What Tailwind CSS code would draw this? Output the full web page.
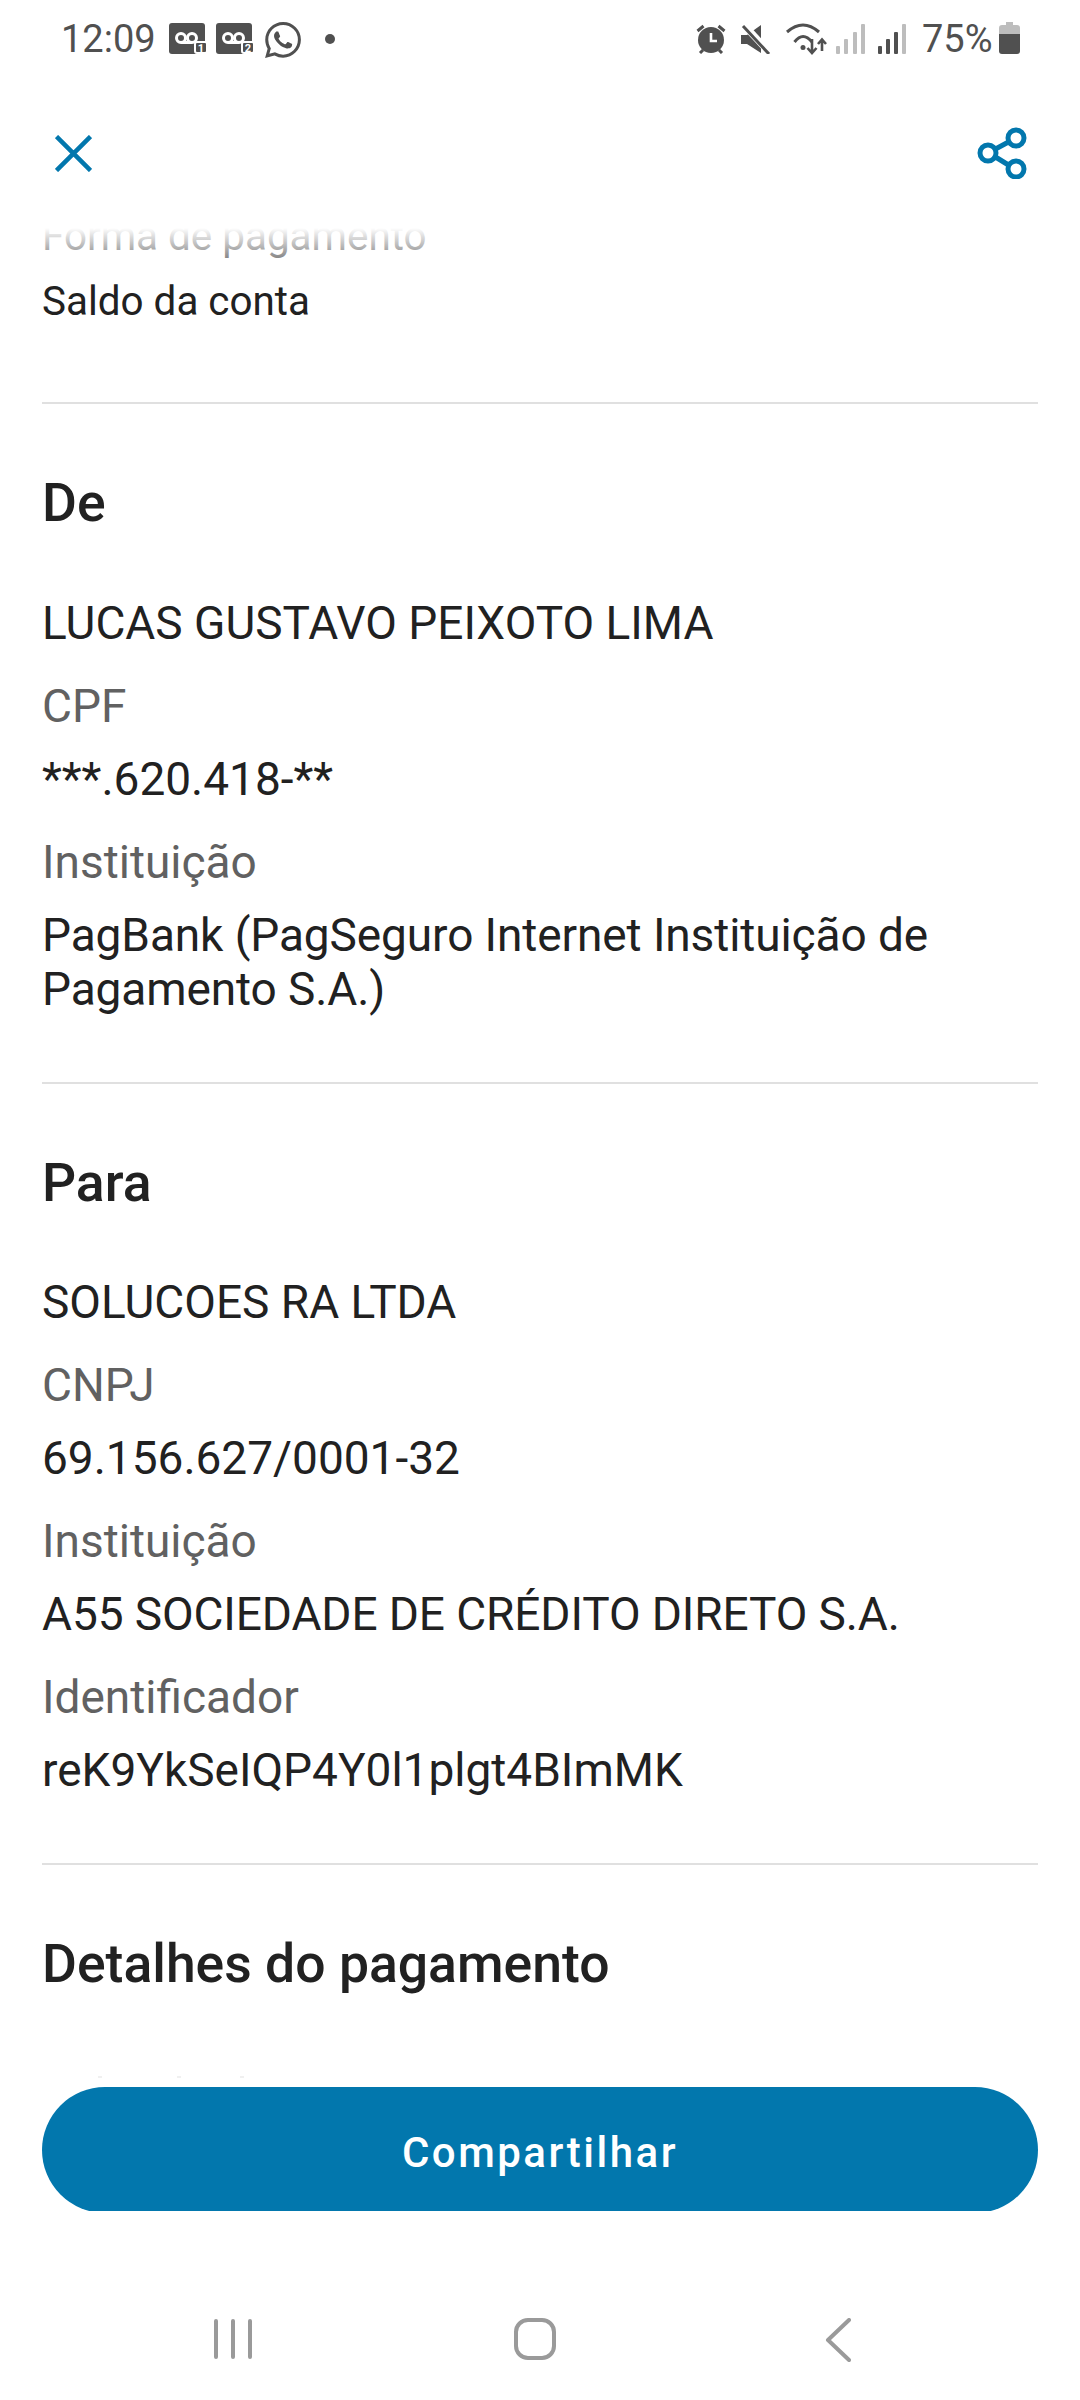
<!DOCTYPE html>
<html lang="pt-BR">
<head>
<meta charset="utf-8">
<title>Comprovante</title>
<script src="https://cdn.jsdelivr.net/npm/@tailwindcss/browser@4"></script>
</head>
<body class="bg-white">
<div class="w-[1080px] h-[2400px] flex flex-col bg-white overflow-hidden font-['Roboto',sans-serif] text-[#212121]">

  <!-- status bar -->
  <div class="h-[72px] shrink-0 flex items-start justify-between pl-[61px] pr-[60px] pt-[22px] text-[#505050]">
    <div class="flex items-start">
      <span class="text-[38px] leading-[34px] w-[94px]">12:09</span>
      <svg class="ml-[14px] mt-[1px]" width="39" height="31" viewBox="0 0 39 31">
        <rect width="36" height="31" rx="3" fill="#505050"/>
        <circle cx="12" cy="15" r="4.500" fill="none" stroke="#fff" stroke-width="3"/>
        <circle cx="23" cy="15" r="4.500" fill="none" stroke="#fff" stroke-width="3"/>
        <path d="M12 19.500h11" stroke="#fff" stroke-width="3"/>
        <rect x="26" y="19" width="12" height="11" rx="2" fill="#505050" stroke="#fff" stroke-width="2"/>
        <text x="32" y="29" text-anchor="middle" font-family="Roboto" font-weight="700" font-size="11" fill="#fff">1</text>
      </svg>
      <svg class="ml-[8px] mt-[1px]" width="39" height="31" viewBox="0 0 39 31">
        <rect width="36" height="31" rx="3" fill="#505050"/>
        <circle cx="12" cy="15" r="4.500" fill="none" stroke="#fff" stroke-width="3"/>
        <circle cx="23" cy="15" r="4.500" fill="none" stroke="#fff" stroke-width="3"/>
        <path d="M12 19.500h11" stroke="#fff" stroke-width="3"/>
        <rect x="26" y="19" width="12" height="11" rx="2" fill="#505050" stroke="#fff" stroke-width="2"/>
        <text x="32" y="29" text-anchor="middle" font-family="Roboto" font-weight="700" font-size="11" fill="#fff">2</text>
      </svg>
      <svg class="ml-[10px]" width="36" height="36" viewBox="0 0 24 24" fill="#505050">
        <path d="M17.472 14.382c-.297-.149-1.758-.867-2.03-.967-.273-.099-.471-.148-.67.15-.197.297-.767.966-.94 1.164-.173.199-.347.223-.644.075-.297-.15-1.255-.463-2.39-1.475-.883-.788-1.48-1.761-1.653-2.059-.173-.297-.018-.458.13-.606.134-.133.298-.347.446-.52.149-.174.198-.298.298-.497.099-.198.05-.371-.025-.52-.075-.149-.669-1.612-.916-2.207-.242-.579-.487-.5-.669-.51-.173-.008-.371-.01-.57-.01-.198 0-.52.074-.792.372-.272.297-1.04 1.016-1.04 2.479 0 1.462 1.065 2.875 1.213 3.074.149.198 2.096 3.2 5.077 4.487.709.306 1.262.489 1.694.625.712.227 1.36.195 1.871.118.571-.085 1.758-.719 2.006-1.413.248-.694.248-1.289.173-1.413-.074-.124-.272-.198-.57-.347m-5.421 7.403h-.004a9.87 9.87 0 01-5.031-1.378l-.361-.214-3.741.982.998-3.648-.235-.374a9.86 9.86 0 01-1.51-5.26c.001-5.45 4.436-9.884 9.888-9.884 2.64 0 5.122 1.03 6.988 2.898a9.825 9.825 0 012.893 6.994c-.003 5.45-4.437 9.884-9.885 9.884m8.413-18.297A11.815 11.815 0 0012.05 0C5.495 0 .16 5.335.157 11.892c0 2.096.547 4.142 1.588 5.945L.057 24l6.305-1.654a11.882 11.882 0 005.683 1.448h.005c6.554 0 11.89-5.335 11.893-11.893a11.821 11.821 0 00-3.48-8.413z"/>
      </svg>
      <span class="ml-[24px] mt-[12px] w-[10px] h-[10px] rounded-full bg-[#505050]"></span>
    </div>
    <div class="flex items-start">
      <svg class="mt-[2px]" width="30" height="30" viewBox="0 0 30 30" fill="#505050">
        <circle cx="15" cy="16" r="13"/>
        <path d="M15 9v8h6" fill="none" stroke="#fff" stroke-width="2.600"/>
        <path d="M1.500 7l6-5M28.500 7l-6-5M4 29l3-3M26 29l-3-3" stroke="#505050" stroke-width="3" fill="none"/>
      </svg>
      <svg class="ml-[15px] mt-[2px]" width="30" height="30" viewBox="0 0 30 30" fill="#505050">
        <path d="M0 11h6L20 1v28L6 20H0z"/>
        <path d="M3 1l26 28" stroke="#fff" stroke-width="7"/>
        <path d="M2 2l26 28" stroke="#505050" stroke-width="3"/>
      </svg>
      <svg class="ml-[15px] mt-[1px]" width="42" height="32" viewBox="0 0 42 32" fill="none" stroke="#505050">
        <path d="M1 9Q17 -5 33 9" stroke-width="3"/>
        <path d="M8.500 19Q17 8 26 19" stroke-width="3"/>
        <circle cx="17" cy="24.500" r="2.500" fill="#505050" stroke="none"/>
        <path d="M26 16v14M21.500 25l4.500 5 4.500-5" stroke-width="2.600"/>
        <path d="M36 28V17M32 21l4-4.500 4 4.500" stroke-width="2.600"/>
      </svg>
      <svg class="ml-[8px] mt-[2px]" width="30" height="30" viewBox="0 0 30 30" fill="#bdbdbd">
        <rect x="0" y="22" width="4" height="8" rx="1"/><rect x="8" y="15" width="4" height="15" rx="1"/><rect x="17" y="8" width="4" height="22" rx="1"/><rect x="25" y="0" width="4" height="30" rx="1"/>
      </svg>
      <svg class="ml-[12px] mt-[2px]" width="28" height="30" viewBox="0 0 28 30" fill="#505050">
        <rect x="0" y="22" width="4" height="8" rx="1"/><rect x="8" y="15" width="4" height="15" rx="1"/><rect x="16" y="8" width="4" height="22" rx="1"/><rect x="24" y="0" width="4" height="30" rx="1" fill="#bdbdbd"/>
      </svg>
      <span class="ml-[16px] text-[38px] leading-[34px] w-[70px]">75%</span>
      <svg class="ml-[7px]" width="21" height="32" viewBox="0 0 21 32">
        <path d="M7 0h7v3h4a3 3 0 0 1 3 3v6H0V6a3 3 0 0 1 3-3h4z" fill="#bdbdbd"/>
        <path d="M0 12h21v17a3 3 0 0 1-3 3H3a3 3 0 0 1-3-3z" fill="#505050"/>
      </svg>
    </div>
  </div>

  <!-- header -->
  <div class="h-[156px] shrink-0 flex items-start justify-between pl-[55px] pr-[53px] pt-[55px] text-[#0277ad]">
    <svg class="mt-[8px]" width="37" height="37" viewBox="0 0 37 37" fill="none" stroke="currentColor" stroke-width="4.500"><path d="M1.500 1.500l34 34M35.500 1.500l-34 34"/></svg>
    <svg width="50" height="52" viewBox="0 0 50 52" fill="none" stroke="currentColor" stroke-width="5">
      <circle cx="11" cy="26" r="8"/><circle cx="39" cy="11" r="8"/><circle cx="39" cy="42" r="8"/>
      <path d="M18.500 22l13-7M18.500 30l13 8"/>
    </svg>
  </div>

  <!-- scroll area -->
  <div class="relative flex-1 min-h-0 overflow-hidden">
    <div class="-mt-[18px] px-[42px] text-[46px] leading-[54px]">
      <div class="border-b-2 border-[#e0e0e0] pb-[73px] text-[40.400px]">
        <p class="text-[#616161]">Forma de pagamento</p>
        <p class="mt-[11px]">Saldo da conta</p>
      </div>

      <div class="border-b-2 border-[#e0e0e0] pt-[69px] pb-[66px]">
        <h2 class="text-[53.500px] leading-[60px] font-medium">De</h2>
        <p class="mt-[63px]">LUCAS GUSTAVO PEIXOTO LIMA</p>
        <p class="mt-[29px] text-[#616161]">CPF</p>
        <p class="mt-[19px]">***.620.418-**</p>
        <p class="mt-[29px] text-[#616161]">Instituição</p>
        <p class="mt-[19px] tracking-[-0.100px]">PagBank (PagSeguro Internet Instituição de Pagamento S.A.)</p>
      </div>

      <div class="border-b-2 border-[#e0e0e0] pt-[69px] pb-[66px]">
        <h2 class="text-[53.500px] leading-[60px] font-medium">Para</h2>
        <p class="mt-[62px]">SOLUCOES RA LTDA</p>
        <p class="mt-[29px] text-[#616161]">CNPJ</p>
        <p class="mt-[19px]">69.156.627/0001-32</p>
        <p class="mt-[29px] text-[#616161]">Instituição</p>
        <p class="mt-[19px] tracking-[-0.100px]">A55 SOCIEDADE DE CRÉDITO DIRETO S.A.</p>
        <p class="mt-[29px] text-[#616161]">Identificador</p>
        <p class="mt-[19px]">reK9YkSeIQP4Y0l1plgt4BImMK</p>
      </div>

      <div class="pt-[69px]">
        <h2 class="text-[53.500px] leading-[60px] font-medium">Detalhes do pagamento</h2>
      </div>
    </div>
    <div class="absolute inset-x-0 top-0 h-[40px] bg-gradient-to-b from-white to-white/0"></div>
    <span class="absolute bottom-[9px] left-[98px] w-[4px] h-[2px] bg-[#f0f0f0]"></span>
    <span class="absolute bottom-[9px] left-[177px] w-[4px] h-[2px] bg-[#f0f0f0]"></span>
    <span class="absolute bottom-[9px] left-[240px] w-[4px] h-[2px] bg-[#f0f0f0]"></span>
  </div>

  <!-- button -->
  <div class="h-[124px] shrink-0 mx-[42px] overflow-hidden">
    <button class="w-full h-[126px] pt-[5px] rounded-[63px] bg-[#0277ad] text-white text-[42px] leading-[54px] font-medium tracking-[2.500px]">Compartilhar</button>
  </div>

  <!-- nav -->
  <div class="h-[189px] shrink-0 flex items-start pl-[214px] pt-[107px]">
    <svg width="38" height="42" viewBox="0 0 38 42" stroke="#9a9a9a" stroke-width="4" stroke-linecap="round"><path d="M2 3v36M19 3v36M36 3v36"/></svg>
    <svg class="ml-[260px]" width="46" height="42" viewBox="0 0 46 42" fill="none" stroke="#9a9a9a" stroke-width="4"><rect x="4" y="2" width="38" height="38" rx="12"/></svg>
    <svg class="ml-[267px]" width="26" height="44" viewBox="0 0 26 44" fill="none" stroke="#9a9a9a" stroke-width="4" stroke-linecap="round" stroke-linejoin="round"><path d="M24 2L3 22l21 20"/></svg>
  </div>
</div>
</body>
</html>
